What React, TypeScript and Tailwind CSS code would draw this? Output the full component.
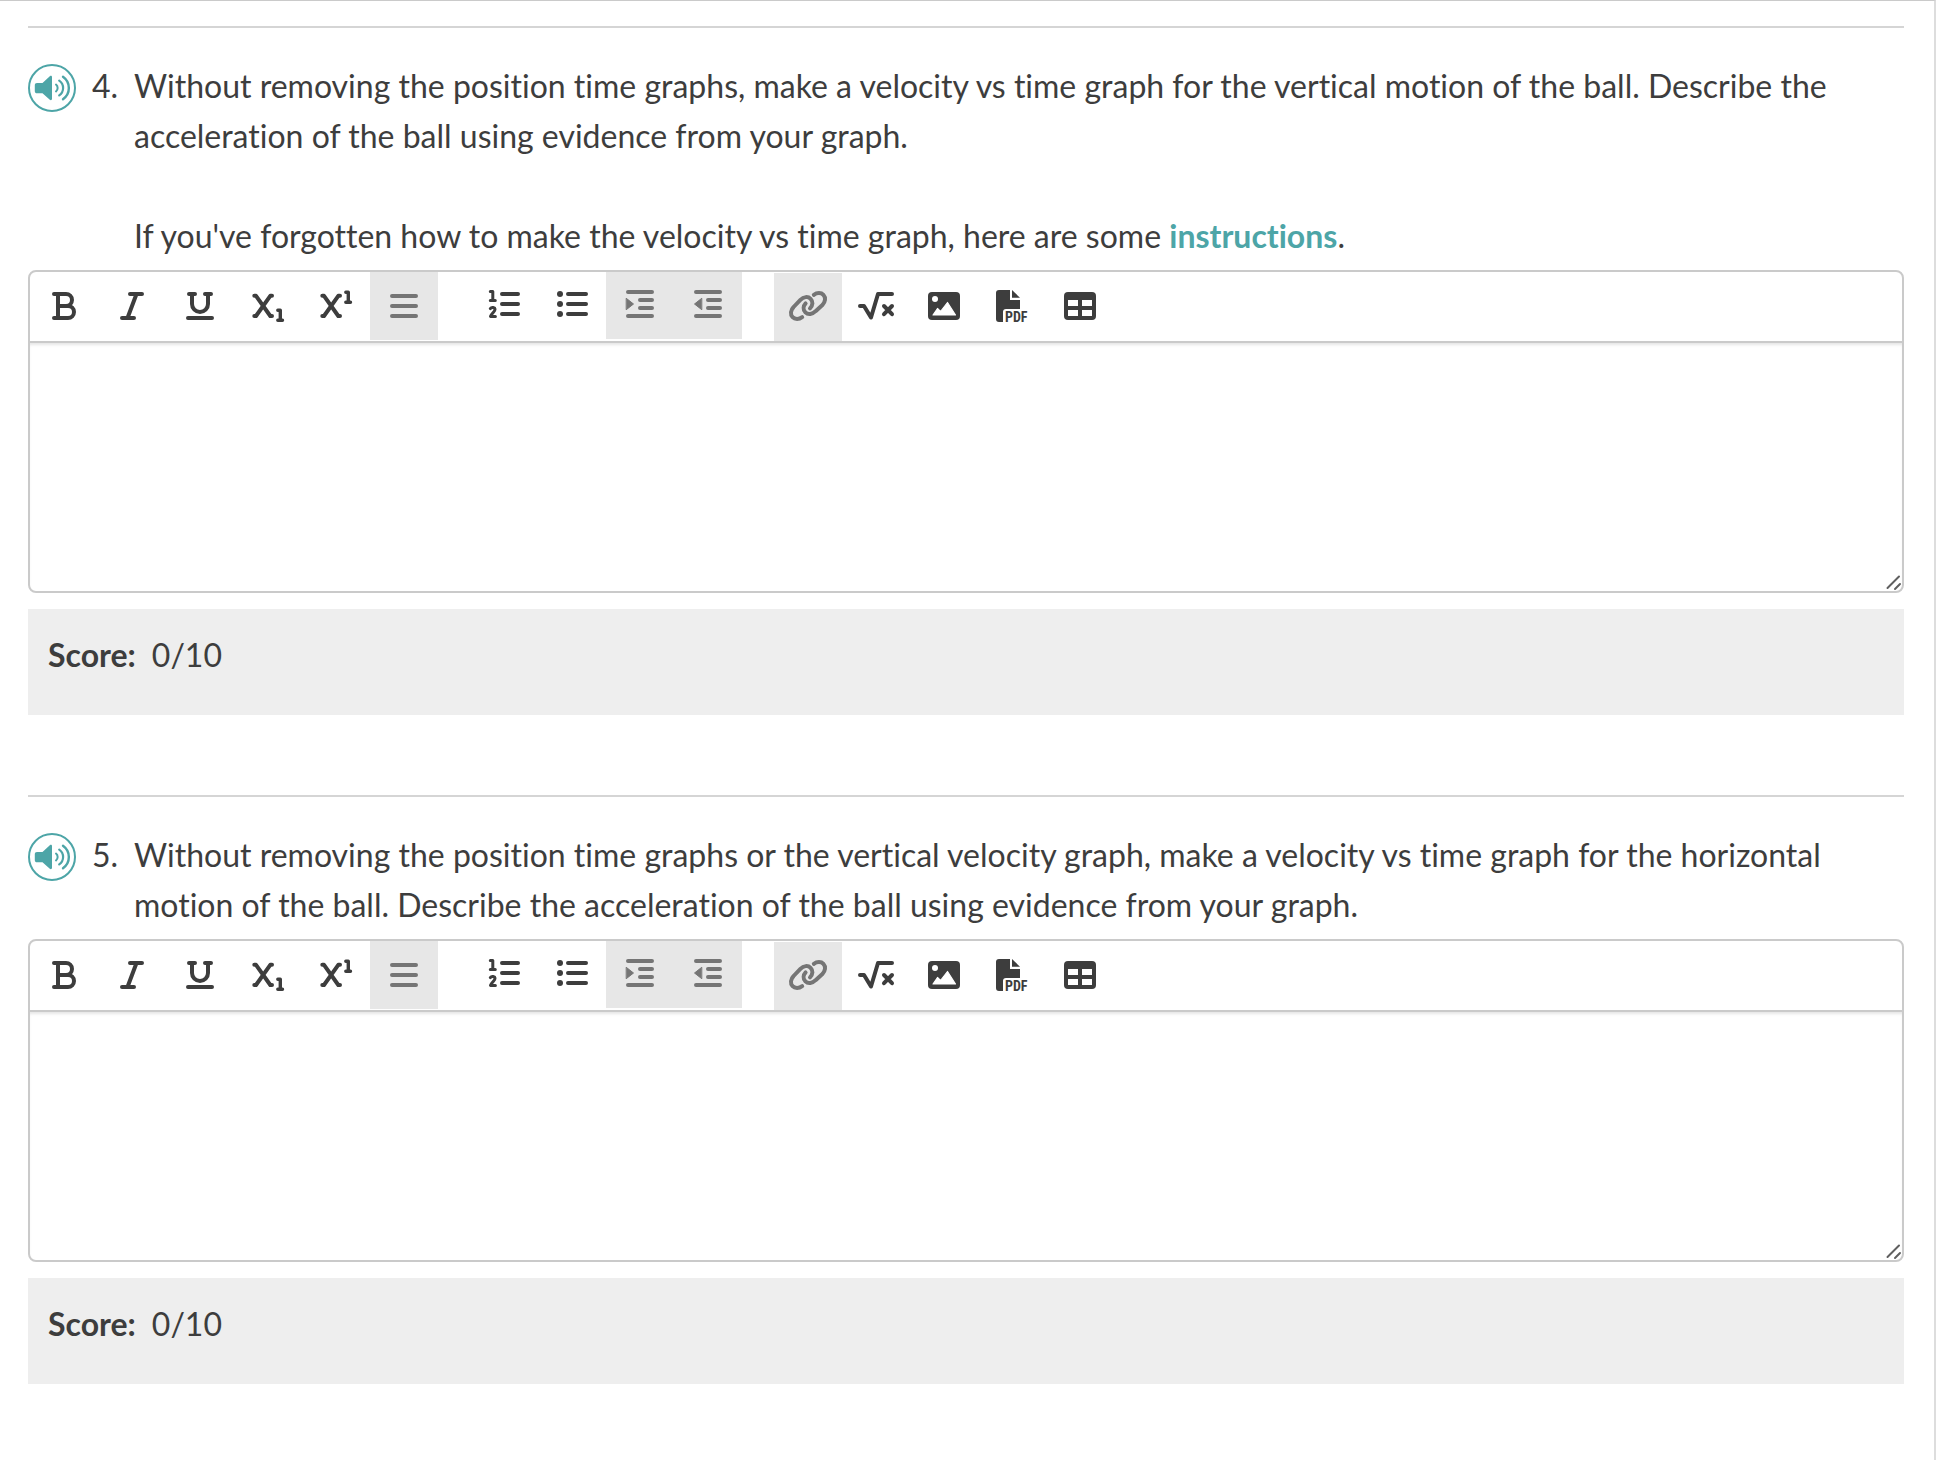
import React, { useState } from 'react';

interface Question {
  id: number;
  body: React.ReactNode;
  score: number;
  maxScore: number;
}

interface Tool {
  label: string;
  icon: React.ReactNode;
  disabled?: boolean;
}

const questions: Question[] = [
  {
    id: 4,
    body: (
      <>
        <p>
          Without removing the position time graphs, make a velocity vs time graph for the vertical
          motion of the ball. Describe the acceleration of the ball using evidence from your graph.
        </p>
        <p className="mt-[50px]">
          If you've forgotten how to make the velocity vs time graph, here are some{' '}
          <a href="#instructions" className="font-bold text-[#4da5a7]">instructions</a>.
        </p>
      </>
    ),
    score: 0,
    maxScore: 10,
  },
  {
    id: 5,
    body: (
      <p>
        Without removing the position time graphs or the vertical velocity graph, make a velocity vs
        time graph for the horizontal motion of the ball. Describe the acceleration of the ball
        using evidence from your graph.
      </p>
    ),
    score: 0,
    maxScore: 10,
  },
];

const textTools: Tool[] = [
  {
    label: 'Bold',
    icon: <path d="M10 8H22a6 6 0 0 1 0 12H14M10 32H24a6 6 0 0 0 0-12H14M14 8V32" />,
  },
  { label: 'Italic', icon: <path d="M18 8H30M10 32H22M24.5 8L15.5 32" /> },
  {
    label: 'Underline',
    icon: <path d="M8 32H32M9 8H15M25 8H31M12 8V18a8 8 0 0 0 16 0V8" />,
  },
  {
    label: 'Subscript',
    icon: (
      <>
        <path d="M6.3 9.8H8L22.3 30H24M24 9.8H22.3L8 30H6.3" />
        <path d="M29.8 24.2H32.3V34M29.8 34.3H34.5" strokeWidth={3.4} />
      </>
    ),
  },
  {
    label: 'Superscript',
    icon: (
      <>
        <path d="M6.3 9.8H8L22.3 30H24M24 9.8H22.3L8 30H6.3" />
        <path d="M29.8 6.2H32.3V16M29.8 16.3H34.5" strokeWidth={3.4} />
      </>
    ),
  },
  { label: 'Align', icon: <path d="M8 10H32M8 20H32M8 30H32" />, disabled: true },
];

const listTools: Tool[] = [
  {
    label: 'Numbered list',
    icon: (
      <>
        <path d="M18 8H34M18 18H34M18 28H34" />
        <path d="M6.3 5.6H8.8V14M6.3 14.4H11.3" strokeWidth={3} />
        <path d="M6.3 22.6C7.5 21 11 21.2 11 23.6C11 25.6 8 27 6.5 30.4H11.4" strokeWidth={3} />
      </>
    ),
  },
  {
    label: 'Bulleted list',
    icon: (
      <>
        <path d="M16 8H34M16 18H34M16 28H34" />
        <g fill="currentColor" stroke="none">
          <circle cx="8" cy="8" r="3" />
          <circle cx="8" cy="18" r="3" />
          <circle cx="8" cy="28" r="3" />
        </g>
      </>
    ),
  },
  {
    label: 'Increase indent',
    icon: (
      <>
        <path d="M8 6H32M20 14H32M20 22H32M8 30H32" />
        <path d="M6.5 12.5L13.5 18L6.5 23.5Z" fill="currentColor" strokeWidth={1} />
      </>
    ),
    disabled: true,
  },
  {
    label: 'Decrease indent',
    icon: (
      <>
        <path d="M8 6H32M20 14H32M20 22H32M8 30H32" />
        <path d="M13.5 12.5L6.5 18L13.5 23.5Z" fill="currentColor" strokeWidth={1} />
      </>
    ),
    disabled: true,
  },
];

const insertTools: Tool[] = [
  {
    label: 'Link',
    icon: (
      <>
        <path d="M14.2 30.2C11 32.6 6.8 32.6 4.6 30.2C2 27.4 2.6 23 5.6 20L12.4 12.8C15.6 9.6 20 9.2 22.6 11.8C25.2 14.4 25 18.4 22 21.4" />
        <path d="M25.8 7.8C29 5.4 33.2 5.4 35.4 7.8C38 10.6 37.4 15 34.4 18L27.6 24.2C24.4 27.4 20 28 17.4 25.4C14.8 22.8 15.2 19 17.6 16.4" />
      </>
    ),
    disabled: true,
  },
  {
    label: 'Equation',
    icon: <path d="M4 19H8L15 30.5L22 7H36M28 19L36 27.2M36 19L28 27.2" />,
  },
  {
    label: 'Image',
    icon: (
      <>
        <rect x="4" y="5" width="32" height="28" rx="4" fill="currentColor" stroke="none" />
        <circle cx="11" cy="12" r="3" fill="#fff" stroke="none" />
        <path d="M9 28L13.5 21.5L16.5 24.5L23.5 15.5L31.5 28Z" fill="#fff" stroke="#fff" strokeWidth={1.2} />
      </>
    ),
  },
  {
    label: 'PDF',
    icon: (
      <g fill="currentColor" stroke="none">
        <path d="M4 6a3 3 0 0 1 3-3H18V13H28V22H14a3 3 0 0 0-3 3V35H7a3 3 0 0 1-3-3Z" />
        <path d="M20 3L28 10.8H20Z" />
        <text x="13" y="35" className="font-['Roboto_Condensed',Roboto,sans-serif] text-[14px] font-bold">
          PDF
        </text>
      </g>
    ),
  },
  {
    label: 'Table',
    icon: (
      <>
        <rect x="4" y="5" width="32" height="28" rx="4" fill="currentColor" stroke="none" />
        <path d="M8 13H18V19H8ZM22 13H32V19H22ZM8 23H18V29H8ZM22 23H32V29H22Z" fill="#fff" stroke="none" />
      </>
    ),
  },
];

const ToolGroup: React.FC<{ tools: Tool[]; className: string }> = ({ tools, className }) => (
  <div className={`flex ${className}`}>
    {tools.map((tool) => (
      <button
        key={tool.label}
        type="button"
        aria-label={tool.label}
        disabled={tool.disabled}
        className="flex w-[68px] items-start justify-center pt-[14px] text-[#3d3d3d] disabled:bg-[#e7e7e7] disabled:text-[#757575]"
      >
        <svg
          viewBox="0 0 40 40"
          className="h-10 w-10 shrink-0"
          fill="none"
          stroke="currentColor"
          strokeWidth={4}
          strokeLinecap="round"
          strokeLinejoin="round"
        >
          {tool.icon}
        </svg>
      </button>
    ))}
  </div>
);

const Editor: React.FC<{ label: string }> = ({ label }) => {
  const [answer, setAnswer] = useState('');

  return (
    <div className="relative overflow-hidden rounded-lg border-2 border-[#cacaca]">
      <div className="flex items-start gap-8 border-b-2 border-[#cacaca]">
        <ToolGroup tools={textTools} className="h-[68px]" />
        <ToolGroup tools={listTools} className="h-[67px]" />
        <ToolGroup tools={insertTools} className="mt-px h-[68px]" />
      </div>
      <textarea
        aria-label={label}
        value={answer}
        onChange={(e) => setAnswer(e.target.value)}
        className="block h-[248px] w-full resize-none px-6 py-4 shadow-[inset_0_3px_3px_-1px_rgba(0,0,0,0.1)] outline-none"
      />
      <svg
        viewBox="0 0 16 16"
        className="absolute right-0 bottom-0 h-4 w-4"
        stroke="#5f5f5f"
        strokeWidth={2}
        strokeLinecap="round"
      >
        <path d="M1.5 13L13 1.5M9 14L14 9" />
      </svg>
    </div>
  );
};

const SpeakButton: React.FC = () => (
  <button type="button" aria-label="Read question aloud" className="mt-[3px] h-12 w-12 shrink-0 text-[#4da5a7]">
    <svg viewBox="0 0 48 48" className="h-12 w-12" fill="none" stroke="currentColor" strokeLinecap="round">
      <circle cx="24" cy="24" r="23" strokeWidth={2} />
      <path
        d="M9 19H14.5L21.8 12.3C22.8 11.4 24 11.8 24 13.2V34.8C24 36.2 22.8 36.6 21.8 35.7L14.5 29.3H9C7.6 29.3 6.8 28.4 6.8 27V21.3C6.8 19.9 7.6 19 9 19Z"
        fill="currentColor"
        stroke="none"
      />
      <path d="M28 20.6C30.2 22.4 30.2 25.6 28 27.4" strokeWidth={2} />
      <path d="M31.2 16.6C36.4 20.2 36.4 27.8 31.2 31.4" strokeWidth={2.2} />
      <path d="M35 12.8C42.8 18.4 42.8 29.6 35 35.2" strokeWidth={2.4} />
    </svg>
  </button>
);

const QuestionItem: React.FC<{ question: Question }> = ({ question }) => (
  <section className="mb-20 border-t-2 border-[#d5d5d5] pt-[33px]">
    <div className="mb-[9px] flex pr-8">
      <SpeakButton />
      <span className="ml-4 w-[42px] shrink-0">{question.id}.</span>
      <div className="flex-1">{question.body}</div>
    </div>
    <Editor label={`Answer to question ${question.id}`} />
    <div className="mt-4 h-[106px] bg-[#eeeeee] px-5 pt-[21px]">
      <span className="mr-4 font-bold">Score:</span>
      <span>
        {question.score}/{question.maxScore}
      </span>
    </div>
  </section>
);

export default function App() {
  return (
    <main className="min-h-screen border-t border-r-2 border-t-[#cacaca] border-r-[#dddddd] bg-white pt-[25px] pr-[30px] pl-7 font-[Lato,sans-serif] text-[32px] leading-[50px] text-[#3d3d3d] [font-variant-ligatures:none]">
      {questions.map((question) => (
        <QuestionItem key={question.id} question={question} />
      ))}
    </main>
  );
}
